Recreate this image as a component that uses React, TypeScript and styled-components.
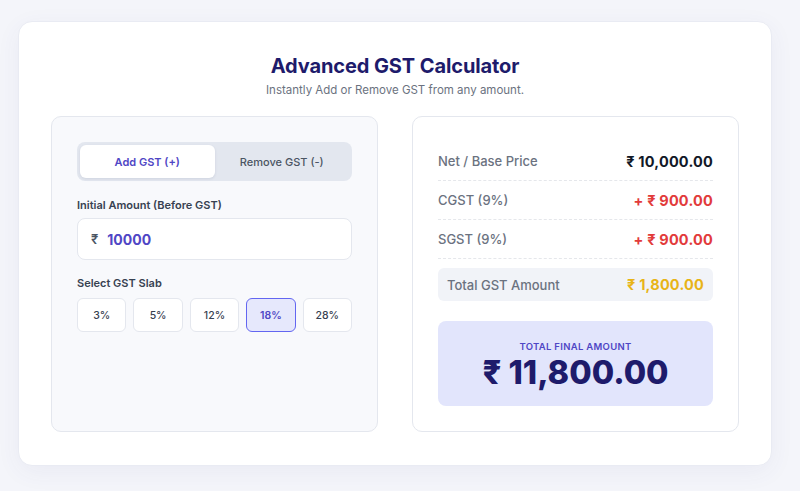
import styled, { createGlobalStyle } from 'styled-components'

const GlobalStyle = createGlobalStyle`
	* { box-sizing: border-box; }
	body {
		margin: 0;
		background: #f4f5fa;
		font-family: Inter, "DejaVu Sans", sans-serif;
	}
`

const Page = styled.div`
	width: 800px;
	height: 491px;
	padding: 21px 28px 25px 18px;
`

const Card = styled.main`
	background: #ffffff;
	border: 1px solid #e9ebf3;
	border-radius: 14px;
	box-shadow: 0 6px 24px rgba(60, 70, 140, 0.06);
	height: 100%;
	padding: 32px;
	display: flex;
	flex-direction: column;
	align-items: center;
`

const Title = styled.h1`
	margin: 0;
	color: #1e1b6b;
	font-size: 20px;
	font-weight: 700;
	letter-spacing: -0.1px;
`

const Subtitle = styled.p`
	margin: 5px 0 0;
	color: #6b7280;
	font-size: 11.5px;
`

const Columns = styled.div`
	display: grid;
	grid-template-columns: 327px 327px;
	gap: 34px;
	margin-top: 19px;
	width: 100%;
	justify-content: center;
`

const Panel = styled.section<{ $tint?: boolean }>`
	height: 316px;
	background: ${p => (p.$tint ? '#f8f9fc' : '#ffffff')};
	border: 1px solid #e4e7ee;
	border-radius: 10px;
	padding: 25px;
	display: flex;
	flex-direction: column;
`

const Toggle = styled.div`
	display: grid;
	grid-template-columns: 1fr 1fr;
	background: #e3e7ef;
	border-radius: 8px;
	padding: 3px;
	height: 39px;
`

const ToggleButton = styled.button<{ $active?: boolean }>`
	border: none;
	border-radius: 6px;
	font-family: inherit;
	font-size: 11px;
	font-weight: ${p => (p.$active ? 600 : 500)};
	color: ${p => (p.$active ? '#4f46c5' : '#4b5563')};
	background: ${p => (p.$active ? '#ffffff' : 'transparent')};
	box-shadow: ${p => (p.$active ? '0 1px 3px rgba(30,40,90,0.1)' : 'none')};
`

const Label = styled.div<{ $top: number }>`
	margin-top: ${p => p.$top}px;
	font-size: 11px;
	font-weight: 600;
	color: #374151;
`

const InputBox = styled.div`
	margin-top: 6px;
	height: 42px;
	background: #ffffff;
	border: 1px solid #e4e7ee;
	border-radius: 8px;
	display: flex;
	align-items: center;
	gap: 9px;
	padding: 0 13px;
`

const Currency = styled.span`
	color: #4b5563;
	font-size: 13px;
	font-weight: 600;
`

const InputValue = styled.span`
	color: #4f46c5;
	font-size: 14px;
	font-weight: 700;
`

const Slabs = styled.div`
	margin-top: 8px;
	display: grid;
	grid-template-columns: repeat(5, 1fr);
	gap: 7px;
`

const Slab = styled.button<{ $active?: boolean }>`
	height: 34px;
	border-radius: 6px;
	font-family: inherit;
	font-size: 10.5px;
	font-weight: ${p => (p.$active ? 600 : 500)};
	color: ${p => (p.$active ? '#4f46c5' : '#374151')};
	background: ${p => (p.$active ? '#e6e8fc' : '#ffffff')};
	border: 1px solid ${p => (p.$active ? '#6366f1' : '#e4e7ee')};
`

const Row = styled.div`
	display: flex;
	justify-content: space-between;
	align-items: center;
	height: 39px;
	border-bottom: 1px dashed #e5e7eb;
`

const RowLabel = styled.span`
	font-size: 13px;
	font-weight: 500;
	color: #6b7280;
`

const RowValue = styled.span<{ $color: string }>`
	font-size: 14.5px;
	font-weight: 700;
	color: ${p => p.$color};
	letter-spacing: 0.2px;
`

const TotalRow = styled.div`
	margin-top: 9px;
	height: 33px;
	background: #f1f3f8;
	border-radius: 6px;
	display: flex;
	justify-content: space-between;
	align-items: center;
	padding: 0 9px;
`

const FinalBox = styled.div`
	margin-top: 20px;
	height: 85px;
	background: #e2e5fc;
	border-radius: 8px;
	display: flex;
	flex-direction: column;
	align-items: center;
	justify-content: center;
	gap: 3px;
	padding-top: 4px;
`

const FinalLabel = styled.div`
	font-size: 9.5px;
	font-weight: 600;
	color: #4f46c5;
	letter-spacing: 0.3px;
`

const FinalValue = styled.div`
	font-size: 32.5px;
	font-weight: 800;
	color: #1e1b6b;
	line-height: 1.1;
`

const slabs = ['3%', '5%', '12%', '18%', '28%']

export default function App() {
	return (
		<Page>
			<GlobalStyle />
			<Card>
				<Title>Advanced GST Calculator</Title>
				<Subtitle>Instantly Add or Remove GST from any amount.</Subtitle>
				<Columns>
					<Panel $tint>
						<Toggle>
							<ToggleButton $active>Add GST (+)</ToggleButton>
							<ToggleButton>Remove GST (-)</ToggleButton>
						</Toggle>
						<Label $top={17}>Initial Amount (Before GST)</Label>
						<InputBox>
							<Currency>₹</Currency>
							<InputValue>10000</InputValue>
						</InputBox>
						<Label $top={16}>Select GST Slab</Label>
						<Slabs>
							{slabs.map(s => (
								<Slab key={s} $active={s === '18%'}>{s}</Slab>
							))}
						</Slabs>
					</Panel>
					<Panel>
						<Row>
							<RowLabel>Net / Base Price</RowLabel>
							<RowValue $color="#111827">₹ 10,000.00</RowValue>
						</Row>
						<Row>
							<RowLabel>CGST (9%)</RowLabel>
							<RowValue $color="#e23b3b">+ ₹ 900.00</RowValue>
						</Row>
						<Row>
							<RowLabel>SGST (9%)</RowLabel>
							<RowValue $color="#e23b3b">+ ₹ 900.00</RowValue>
						</Row>
						<TotalRow>
							<RowLabel>Total GST Amount</RowLabel>
							<RowValue $color="#e8b417">₹ 1,800.00</RowValue>
						</TotalRow>
						<FinalBox>
							<FinalLabel>TOTAL FINAL AMOUNT</FinalLabel>
							<FinalValue>₹ 11,800.00</FinalValue>
						</FinalBox>
					</Panel>
				</Columns>
			</Card>
		</Page>
	)
}
